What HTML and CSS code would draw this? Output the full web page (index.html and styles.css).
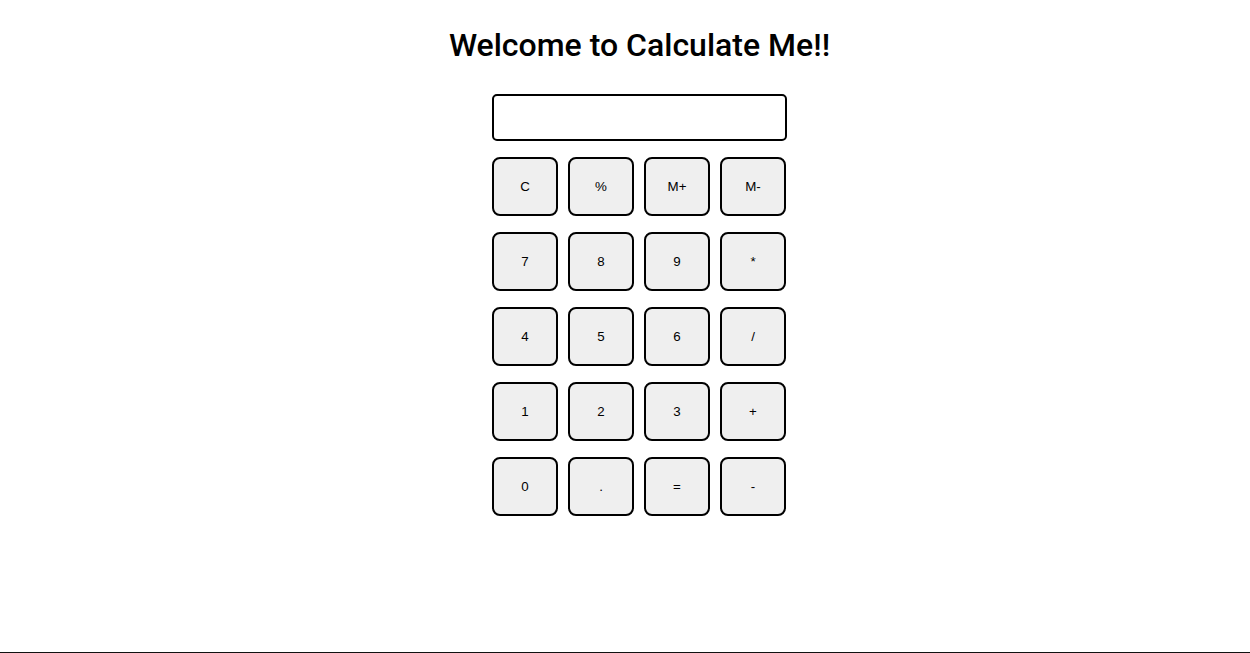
FILE: index.html
```html
<!DOCTYPE html>
<html>
<head>
<meta charset="utf-8">
<title>Calculate Me</title>
<link rel="stylesheet" href="styles.css">
</head>
<body>
<div class="page">
  <div class="app">
    <h1 class="title">Welcome to Calculate Me!!</h1>
    <div class="calc">
      <input class="display" type="text">
      <div class="keys">
        <button class="key">C</button>
        <button class="key">%</button>
        <button class="key">M+</button>
        <button class="key">M-</button>
        <button class="key">7</button>
        <button class="key">8</button>
        <button class="key">9</button>
        <button class="key">*</button>
        <button class="key">4</button>
        <button class="key">5</button>
        <button class="key">6</button>
        <button class="key">/</button>
        <button class="key">1</button>
        <button class="key">2</button>
        <button class="key">3</button>
        <button class="key">+</button>
        <button class="key">0</button>
        <button class="key">.</button>
        <button class="key">=</button>
        <button class="key">-</button>
      </div>
    </div>
  </div>
</div>
</body>
</html>
```

FILE: styles.css
```css
html, body {
  margin: 0;
  padding: 0;
  background: #fff;
}

.page {
  box-sizing: border-box;
  height: 653px;
  border-bottom: 1px solid #111;
  overflow: hidden;
}

.app {
  display: flex;
  flex-direction: column;
  align-items: center;
  padding-left: 29px;
}

.title {
  font-family: Roboto, "Liberation Sans", sans-serif;
  font-weight: 500;
  font-size: 32px;
  line-height: 38px;
  margin: 26px 0 30px;
  color: #000;
}

.calc {
  display: flex;
  flex-direction: column;
  gap: 16px;
  width: 295px;
}

.display {
  box-sizing: border-box;
  width: 295px;
  height: 47px;
  margin: 0;
  border: 2px solid #000;
  border-radius: 5px;
  background: #fff;
  outline: none;
}

.keys {
  display: grid;
  grid-template-columns: repeat(4, 66px);
  grid-auto-rows: 59px;
  column-gap: 10px;
  row-gap: 16px;
}

.key {
  box-sizing: border-box;
  margin: 0;
  padding: 0;
  border: 2px solid #000;
  border-radius: 8px;
  background: #efefef;
  font-family: "Liberation Sans", Arial, sans-serif;
  font-size: 13.333px;
  color: #000;
}
```
